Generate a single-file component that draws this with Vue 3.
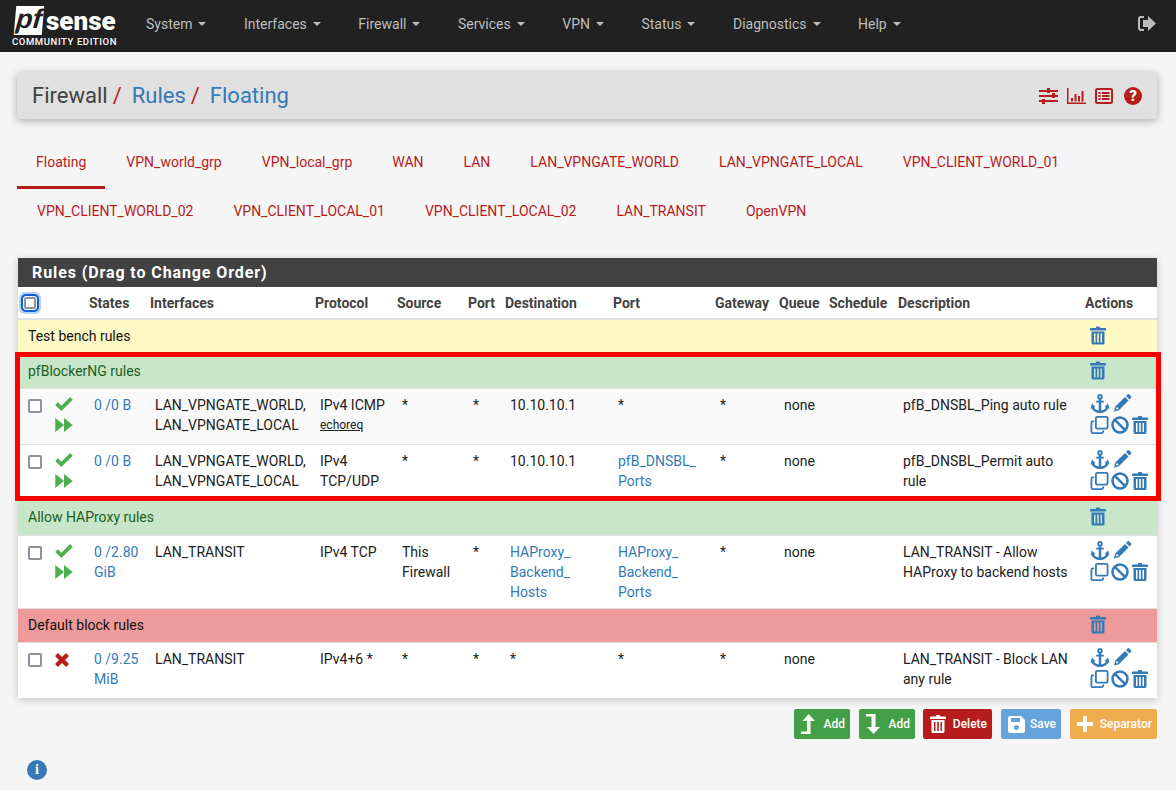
<template>
  <div class="page">
    <svg class="defs" width="0" height="0">
      <symbol id="i-trash" viewBox="0 0 16 18">
        <path d="M5.500 1.500 6.500 0h3l1 1.500H15a1 1 0 0 1 1 1V4H0V2.500a1 1 0 0 1 1-1z" />
        <path fill-rule="evenodd" d="M1.500 5h13v11.500a1.500 1.500 0 0 1-1.500 1.500H3a1.500 1.500 0 0 1-1.500-1.500zM4 7v9h1.500V7zM7.200 7v9h1.600V7zM10.500 7v9H12V7z" />
      </symbol>
      <symbol id="i-anchor" viewBox="0 0 20 20">
        <path fill-rule="evenodd" d="M10 0a3 3 0 0 1 1.300 5.700V7H14v2h-2.700v8.300c2.400-.3 4.300-1.400 5-3l-1.500-.6L18.500 10 20 15.500l-1.300-.5C17.600 17.800 14 20 10 20S2.400 17.800 1.300 15L0 15.500 1.500 10l3.700 3.700-1.500.6c.7 1.600 2.600 2.700 5 3V9H6V7h2.700V5.700A3 3 0 0 1 10 0zm0 2a1 1 0 1 0 0 2 1 1 0 0 0 0-2z" />
      </symbol>
      <symbol id="i-pencil" viewBox="0 0 20 20">
        <path d="M15.500 .6a1.500 1.500 0 0 1 2.100 0l1.800 1.800a1.500 1.500 0 0 1 0 2.100l-1.600 1.600-3.900-3.900zM12.800 3.300l3.900 3.900L6 18 .5 19.500 2 14zM3.500 14.200l-.7 3 3-.7z" />
      </symbol>
      <symbol id="i-clone" viewBox="0 0 20 20">
        <rect x="6" y="1" width="13" height="13" rx="1.500" fill="none" stroke="currentColor" stroke-width="2" />
        <path d="M4 6H2.500A1.500 1.500 0 0 0 1 7.500v10A1.500 1.500 0 0 0 2.500 19h10a1.500 1.500 0 0 0 1.500-1.500V16" fill="none" stroke="currentColor" stroke-width="2" />
      </symbol>
      <symbol id="i-ban" viewBox="0 0 20 20">
        <circle cx="10" cy="10" r="8.300" fill="none" stroke="currentColor" stroke-width="2.800" />
        <path d="M4.200 4.200 15.800 15.800" stroke="currentColor" stroke-width="2.800" />
      </symbol>
      <symbol id="i-check" viewBox="0 0 20 16">
        <path d="M7 16 0 9l3-3 4 4L17 0l3 3z" />
      </symbol>
      <symbol id="i-forward" viewBox="0 0 20 16">
        <path d="M0 0 10 8 0 16zM10 0 20 8 10 16z" />
      </symbol>
      <symbol id="i-times" viewBox="0 0 14 14">
        <path d="M3 0 7 4l4-4 3 3-4 4 4 4-3 3-4-4-4 4-3-3 4-4-4-4z" />
      </symbol>
    </svg>

    <header class="navbar">
      <div class="brand">
        <div class="brand-top"><span class="pf">pf</span><span class="sense">sense</span></div>
        <div class="edition">COMMUNITY EDITION</div>
      </div>
      <nav class="menu">
        <a v-for="m in menu" :key="m" class="menu-item">{{ m }}<i class="caret"></i></a>
      </nav>
      <svg class="logout" viewBox="0 0 18 15" width="18" height="15">
        <path d="M6 1H3a2 2 0 0 0-2 2v9a2 2 0 0 0 2 2h3" fill="none" stroke="#bdbdbd" stroke-width="2" />
        <path d="M10 0 18 7.500 10 15v-4H5V4h5z" fill="#bdbdbd" />
      </svg>
    </header>

    <main class="content">
      <div class="crumbs">
        <h1>
          <span class="plain">Firewall</span><span class="slash">/</span><a>Rules</a><span class="slash">/</span><a>Floating</a>
        </h1>
        <div class="crumb-icons">
          <svg viewBox="0 0 19 16" width="19" height="16">
            <path d="M0 2h19v2H0zM0 7h19v2H0zM0 12h19v2H0z" />
            <path d="M8 0h3v5H8zM13 5h3v5h-3zM3 11h3v5H3z" />
          </svg>
          <svg viewBox="0 0 19 16" width="19" height="16">
            <path d="M0 0h1.500v14.500H19V16H0zM4 10h2v3.500H4zM7.500 6h2v7.500h-2zM11 8h2v5.500h-2zM14.500 3h2v10.500h-2z" />
          </svg>
          <svg viewBox="0 0 18 16" width="18" height="16">
            <rect x="1" y="1" width="16" height="14" rx="1.500" fill="none" stroke="#b71c1c" stroke-width="2" />
            <path d="M3.500 4h2v2h-2zM7 4h7.500v2H7zM3.500 7h2v2h-2zM7 7h7.500v2H7zM3.500 10h2v2h-2zM7 10h7.500v2H7z" />
          </svg>
          <span class="help">?</span>
        </div>
      </div>

      <div class="tabs">
        <a v-for="(t, i) in tabs" :key="t" class="tab" :class="{ active: i === 0 }">{{ t }}</a>
      </div>

      <section class="panel">
        <h2>Rules (Drag to Change Order)</h2>
        <table>
          <colgroup>
            <col v-for="(w, i) in cols" :key="i" :style="{ width: w + 'px' }" />
          </colgroup>
          <thead>
            <tr>
              <th class="check-cell"><input type="checkbox" class="box focused" /></th>
              <th></th>
              <th v-for="h in heads" :key="h">{{ h }}</th>
            </tr>
          </thead>
          <tbody>
            <template v-for="(r, i) in rows" :key="i">
              <tr v-if="r.sep" class="sep" :class="r.sep">
                <td colspan="13">{{ r.title }}</td>
                <td class="sep-act"><svg class="ic trash"><use href="#i-trash" /></svg></td>
              </tr>
              <tr v-else class="rule" :class="{ odd: r.odd }">
                <td class="check-cell"><input type="checkbox" class="box" /></td>
                <td class="status">
                  <template v-if="r.pass">
                    <svg class="ok" width="18" height="14"><use href="#i-check" /></svg>
                    <svg class="ok" width="18" height="14"><use href="#i-forward" /></svg>
                  </template>
                  <svg v-else class="block" width="14" height="14"><use href="#i-times" /></svg>
                </td>
                <td><a>{{ r.states }}</a></td>
                <td>{{ r.iface }}</td>
                <td>{{ r.proto }}<u v-if="r.icmp" class="icmp">{{ r.icmp }}</u></td>
                <td>{{ r.src }}</td>
                <td>*</td>
                <td><a v-if="r.destLink">{{ r.dest }}</a><template v-else>{{ r.dest }}</template></td>
                <td><a v-if="r.portLink">{{ r.port }}</a><template v-else>{{ r.port }}</template></td>
                <td>*</td>
                <td>none</td>
                <td></td>
                <td class="desc">{{ r.desc }}</td>
                <td class="actions">
                  <div class="act-row top">
                    <svg class="ic anchor"><use href="#i-anchor" /></svg>
                    <svg class="ic pencil"><use href="#i-pencil" /></svg>
                  </div>
                  <div class="act-row">
                    <svg class="ic clone"><use href="#i-clone" /></svg>
                    <svg class="ic ban"><use href="#i-ban" /></svg>
                    <svg class="ic trash"><use href="#i-trash" /></svg>
                  </div>
                </td>
              </tr>
            </template>
          </tbody>
        </table>
      </section>

      <div class="buttons">
        <button class="btn green">
          <svg viewBox="0 0 14 20" width="14" height="20"><path d="M7.500 0 14 7h-4.500v13H0v-2.500h6V7H1.500z" fill="#fff" /></svg>Add
        </button>
        <button class="btn green">
          <svg viewBox="0 0 14 20" width="14" height="20"><path d="M0 0h9.500v13H14l-6.500 7L1 13h4.500V2.500H0z" fill="#fff" /></svg>Add
        </button>
        <button class="btn red">
          <svg class="white" width="16" height="18"><use href="#i-trash" /></svg>Delete
        </button>
        <button class="btn blue">
          <svg viewBox="0 0 17 17" width="17" height="17"><path fill="#fff" fill-rule="evenodd" d="M2 0h11l4 4v11a2 2 0 0 1-2 2H2a2 2 0 0 1-2-2V2a2 2 0 0 1 2-2zm1 2v4h9V2zm5.500 7a2.500 2.500 0 1 0 0 5 2.500 2.500 0 0 0 0-5z" /></svg>Save
        </button>
        <button class="btn orange">
          <svg viewBox="0 0 16 16" width="16" height="16"><path d="M6 0h4v6h6v4h-6v6H6v-6H0V6h6z" fill="#fff" /></svg>Separator
        </button>
      </div>

      <div class="info">i</div>
    </main>

    <div class="highlight"></div>
  </div>
</template>

<script setup>
const menu = ['System', 'Interfaces', 'Firewall', 'Services', 'VPN', 'Status', 'Diagnostics', 'Help']

const tabs = [
  'Floating', 'VPN_world_grp', 'VPN_local_grp', 'WAN', 'LAN', 'LAN_VPNGATE_WORLD', 'LAN_VPNGATE_LOCAL',
  'VPN_CLIENT_WORLD_01', 'VPN_CLIENT_WORLD_02', 'VPN_CLIENT_LOCAL_01', 'VPN_CLIENT_LOCAL_02', 'LAN_TRANSIT', 'OpenVPN',
]

const cols = [27, 39, 61, 165, 82, 71, 37, 108, 102, 64, 50, 69, 187, 77]
const heads = ['States', 'Interfaces', 'Protocol', 'Source', 'Port', 'Destination', 'Port', 'Gateway', 'Queue', 'Schedule', 'Description', 'Actions']

const rows = [
  { sep: 'yellow', title: 'Test bench rules' },
  { sep: 'green', title: 'pfBlockerNG rules' },
  {
    odd: true, pass: true, states: '0 /0 B', iface: 'LAN_VPNGATE_WORLD, LAN_VPNGATE_LOCAL', proto: 'IPv4 ICMP', icmp: 'echoreq',
    src: '*', dest: '10.10.10.1', port: '*', desc: 'pfB_DNSBL_Ping auto rule',
  },
  {
    pass: true, states: '0 /0 B', iface: 'LAN_VPNGATE_WORLD, LAN_VPNGATE_LOCAL', proto: 'IPv4 TCP/UDP',
    src: '*', dest: '10.10.10.1', port: 'pfB_DNSBL_ Ports', portLink: true, desc: 'pfB_DNSBL_Permit auto rule',
  },
  { sep: 'green', title: 'Allow HAProxy rules' },
  {
    pass: true, states: '0 /2.80 GiB', iface: 'LAN_TRANSIT', proto: 'IPv4 TCP', src: 'This Firewall',
    dest: 'HAProxy_ Backend_ Hosts', destLink: true, port: 'HAProxy_ Backend_ Ports', portLink: true,
    desc: 'LAN_TRANSIT - Allow HAProxy to backend hosts',
  },
  { sep: 'red', title: 'Default block rules' },
  {
    pass: false, states: '0 /9.25 MiB', iface: 'LAN_TRANSIT', proto: 'IPv4+6 *', src: '*', dest: '*', port: '*',
    desc: 'LAN_TRANSIT - Block LAN any rule',
  },
]
</script>

<style>
html, body {
  margin: 0;
  background: #f5f5f5;
}
</style>

<style scoped>
.page {
  position: relative;
  width: 1176px;
  height: 790px;
  overflow: hidden;
  font-family: Roboto, "Liberation Sans", sans-serif;
  font-size: 14px;
  line-height: 20px;
  color: #212121;
  background: #f5f5f5;
}
.defs {
  position: absolute;
}
a {
  color: #337ab7;
}

/* navbar */
.navbar {
  display: flex;
  align-items: center;
  height: 52px;
  background: #212121;
  padding: 0 20px 0 12px;
}
.brand {
  width: 117px;
  color: #fff;
}
.brand-top {
  display: flex;
  align-items: center;
  height: 30px;
  margin: 0 0 0 3px;
}
.pf {
  width: 28px;
  height: 29px;
  background: #fff;
  color: #212121;
  font: italic bold 27px/26px "Liberation Sans", sans-serif;
  text-align: center;
  transform: skewX(-5deg);
}
.sense {
  font: 900 26px/20px Roboto, sans-serif;
  margin-left: 3px;
  padding-top: 2px;
}
.edition {
  font-size: 9.500px;
  line-height: 11px;
  font-weight: 500;
  letter-spacing: .6px;
  white-space: nowrap;
  margin-top: 1px;
}
.menu {
  display: flex;
  margin-left: 17px;
  margin-bottom: 4px;
  flex: 1;
}
.menu-item {
  color: #bdbdbd;
  padding: 0 14px 0 0;
  margin-right: 37.500px;
  white-space: nowrap;
  position: relative;
}
.caret {
  display: inline-block;
  border-top: 4px solid #bdbdbd;
  border-left: 4px solid transparent;
  border-right: 4px solid transparent;
  position: absolute;
  right: 0;
  top: 8px;
}
.logout {
  display: block;
  margin-bottom: 6px;
}

/* page */
.content {
  padding: 20px 19px 0 17px;
}
.crumbs {
  display: flex;
  align-items: center;
  justify-content: space-between;
  height: 47px;
  padding: 0 15px;
  background: #e0e0e0;
  border-radius: 3px;
  box-shadow: 0 2px 8px rgba(0, 0, 0, .3);
}
h1 {
  margin: 0;
  font-size: 22px;
  font-weight: 400;
  line-height: 47px;
  color: #337ab7;
  white-space: nowrap;
}
.plain {
  color: #424242;
}
.slash {
  color: #b71c1c;
  margin: 0 10px 0 5px;
}
.crumb-icons {
  display: flex;
  align-items: center;
  gap: 9px;
  fill: #b71c1c;
}
.help {
  width: 18px;
  height: 18px;
  margin-left: 2px;
  border-radius: 50%;
  background: #b71c1c;
  color: #fff;
  font-weight: 900;
  font-size: 15px;
  line-height: 18px;
  text-align: center;
}

/* tabs */
.tabs {
  display: flex;
  flex-wrap: wrap;
  margin-top: 18px;
  margin-bottom: 23px;
}
.tab {
  color: #b71c1c;
  padding: 15px 20px 14px;
  height: 20px;
  border-bottom: 3px solid transparent;
  line-height: 20px;
  box-sizing: content-box;
  margin-bottom: -3px;
}
.tab.active {
  color: #b71c1c;
  padding-left: 19px;
  padding-right: 19px;
  margin-right: 1px;
  border-bottom-color: #b71c1c;
}

/* rules panel */
.panel {
  margin-left: 1px;
  background: #fff;
  box-shadow: 0 2px 8px rgba(0, 0, 0, .2);
}
h2 {
  margin: 0;
  height: 29px;
  padding: 0 14px;
  background: #424242;
  color: #fff;
  font-size: 16px;
  font-weight: 700;
  line-height: 29px;
  letter-spacing: .9px;
}
table {
  width: 100%;
  table-layout: fixed;
  border-collapse: collapse;
  border-spacing: 0;
}
th {
  height: 31px;
  padding: 0 0 0 5px;
  text-align: left;
  font-size: 14px;
  font-weight: 700;
  color: #424242;
  border-bottom: 2px solid #e0e0e0;
  white-space: nowrap;
}
td {
  padding: 5px 0 7px 10px;
  vertical-align: top;
  border-top: 1px solid #e0e0e0;
}
.rule td {
  padding-top: 6px;
  padding-bottom: 6px;
}
.rule .check-cell {
  padding: 10px 0 0 10px;
}
thead .check-cell {
  padding: 0;
  vertical-align: middle;
}
.box {
  appearance: none;
  display: block;
  width: 14px;
  height: 14px;
  margin: 0;
  box-sizing: border-box;
  border: 2px solid #8f8f9d;
  border-radius: 2px;
  background: #fff;
}
.box.focused {
  width: 12px;
  height: 12px;
  margin-left: 6px;
  outline: 2px solid #0a5fd8;
  outline-offset: 1px;
  box-shadow: 0 0 0 1px #fff, 0 0 0 5px #b9d2f2;
}
.rule .status {
  padding-top: 8px;
}
.status svg {
  display: block;
}
.ok {
  fill: #4caf50;
}
.ok + .ok {
  margin-top: 7px;
}
.block {
  fill: #b71c1c;
  margin-top: 2px;
}
.icmp {
  display: block;
  font-size: 12px;
  line-height: 18px;
  margin-top: 1px;
}
.sep td {
  height: 27.500px;
  padding: 6px 0 0 10px;
  box-sizing: content-box;
  color: #1b5e20;
}
.sep.yellow td, .sep.red td {
  color: #111;
}
.yellow {
  background: #fff9c4;
}
.green {
  background: #c8e6c9;
}
.red {
  background: #ef9a9a;
}
.odd {
  background: #f9f9f9;
}
.desc {
  padding-right: 10px;
}
.ic {
  display: block;
  width: 18px;
  height: 18px;
  flex: none;
  fill: #337ab7;
  color: #337ab7;
}
.ic.trash {
  width: 16px;
  height: 19px;
}
.rule .actions {
  padding-top: 5px;
  padding-bottom: 10px;
}
.act-row {
  display: flex;
  height: 18px;
}
.act-row.top {
  height: 19px;
  margin-bottom: 3px;
}
.ic.anchor {
  width: 20px;
  height: 19px;
}
.ic.pencil {
  width: 19px;
  height: 18px;
  margin-left: 3px;
}
.ic.clone {
  width: 19px;
}
.ic.ban {
  margin-left: 2px;
}
.act-row .ic.trash {
  height: 18px;
  margin-left: 3px;
}

/* bottom */
.buttons {
  display: flex;
  justify-content: flex-end;
  gap: 9px;
  margin-top: 11px;
}
.btn {
  display: flex;
  align-items: center;
  justify-content: space-between;
  height: 30px;
  box-sizing: border-box;
  padding: 0 4px 0 6px;
  border: 1px solid transparent;
  border-radius: 2px;
  color: #fff;
  font: 500 12px Roboto, sans-serif;
}
.btn.green {
  width: 56px;
  background: #43a047;
}
.btn.red {
  width: 69px;
  margin-left: -1px;
  background: #b71c1c;
}
.btn.blue {
  width: 60px;
  background: #65a3dd;
}
.btn.orange {
  width: 87px;
  background: #f0ad4e;
}
.white {
  fill: #fff;
}
.info {
  position: absolute;
  left: 27px;
  top: 760px;
  width: 20px;
  height: 20px;
  border-radius: 50%;
  background: #337ab7;
  color: #fff;
  font: bold 14px/20px "Liberation Serif", serif;
  text-align: center;
}
.highlight {
  position: absolute;
  left: 15px;
  top: 352px;
  width: 1136px;
  height: 139px;
  border: 5px solid #f00;
  pointer-events: none;
}
</style>
